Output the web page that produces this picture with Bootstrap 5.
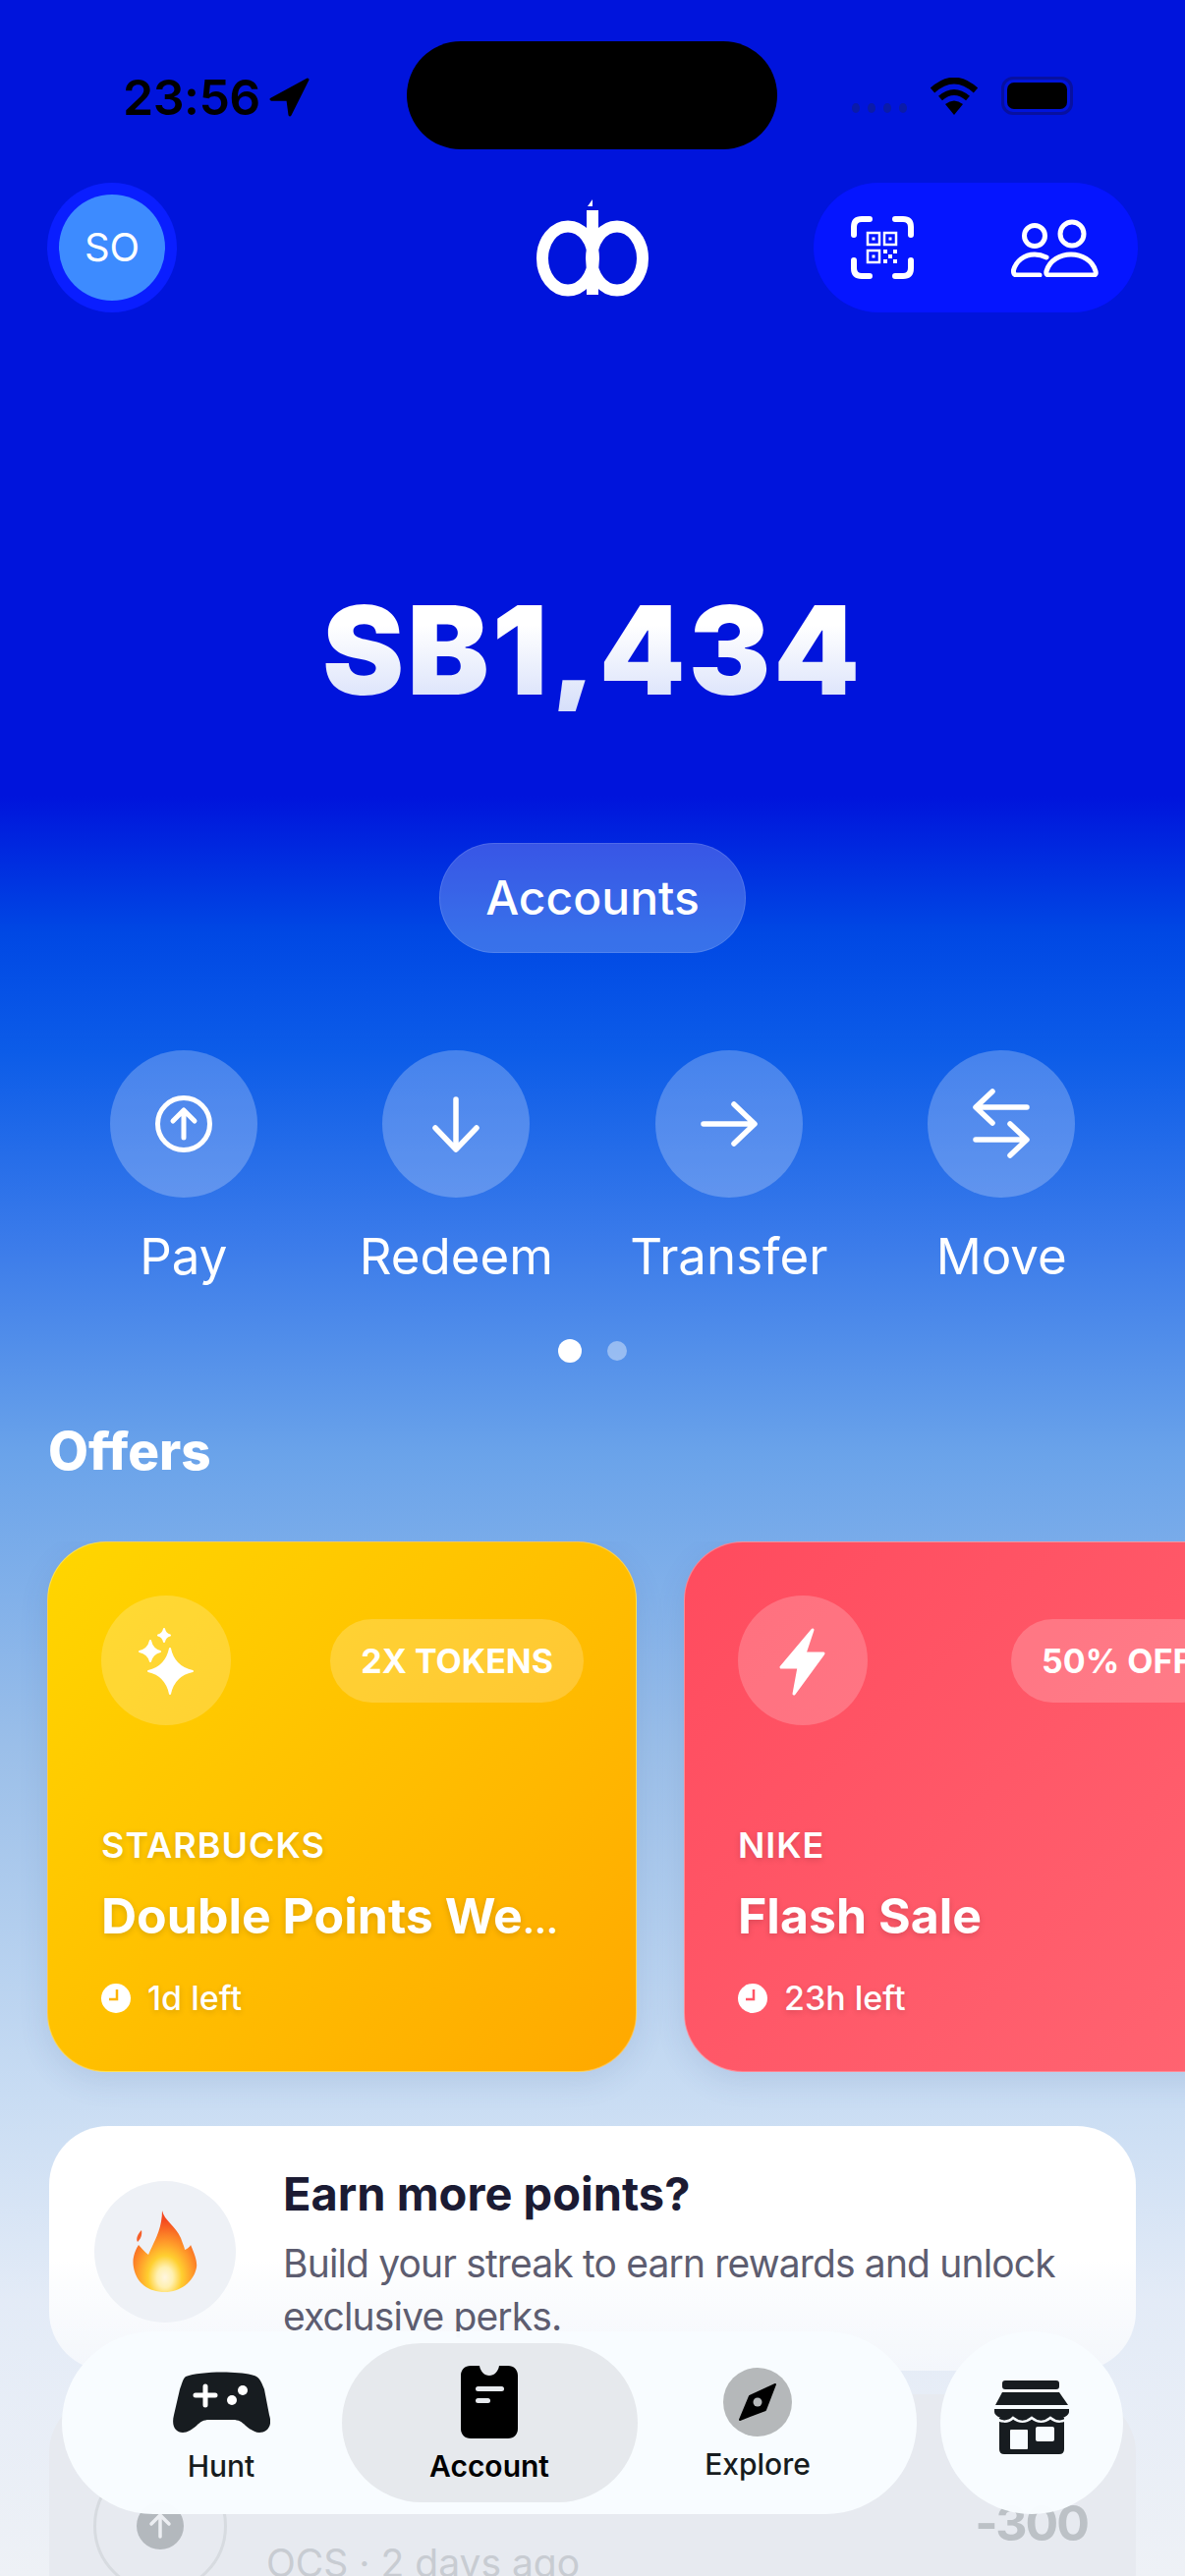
<!DOCTYPE html>
<html>
  <head>
    <meta charset="UTF-8" />
    <meta name="viewport" content="width=device-width, initial-scale=1.0" />
    <title>Account</title>
    <link href="https://cdn.jsdelivr.net/npm/bootstrap@5.3.0/dist/css/bootstrap.min.css" rel="stylesheet" />
    <style>
      html, body { width: 1206px; height: 2622px; overflow: hidden; }
      body {
        font-family: "Inter", "Liberation Sans", sans-serif;
        background: linear-gradient(180deg, #0014dc 0, #0014dc 810px, #0048e4 950px, #0c5ce8 1070px, #3c7cea 1270px, #6aa3ea 1480px, #9bbfe9 1780px, #c8dcf3 2130px, #e3ebf7 2340px, #eef1f6 2622px);
        position: relative;
      }
      .status-row { height: 186px; padding: 42px 114px 0 125px; }
      .clock-text { font-size: 50px; font-weight: 600; color: #000; line-height: 1; letter-spacing: -0.5px; padding-top: 32px; }
      .arrow-mark { margin-top: 37px; }
      .island { width: 377px; height: 110px; background: #000; border-radius: 55px; position: absolute; left: 414px; top: 42px; }
      .status-right { padding-top: 36px; }
      .sig-dots { gap: 8px; margin-top: 27px; margin-right: 23px; }
      .sig-dot { width: 8px; height: 10px; border-radius: 50%; background: #0a1ba8; }
      .wifi-mark { margin-top: 1px; margin-right: 23px; }
      .batt-shell { width: 73px; height: 39px; border: 3px solid #0710a0; border-radius: 12px; padding: 3px; }
      .batt-core { background: #000; border-radius: 7px; width: 100%; height: 100%; }
      .top-row { display: grid; grid-template-columns: 1fr auto 1fr; padding: 0 48px; height: 132px; }
      .avatar-ring { width: 132px; height: 132px; background: #0a1eff; padding: 12px; }
      .avatar-core { width: 108px; height: 108px; background: #3d8bff; color: #fff; font-size: 40px; font-weight: 400; }
      .tools-pill { width: 330px; height: 132px; background: #0515ff; padding-left: 38px; padding-right: 39px; }
      .balance-text {
        font-size: 125px; font-weight: 900; line-height: 1; letter-spacing: 3px; margin-top: 281px;
        background: linear-gradient(180deg, #ffffff 30%, #d6dffa 100%);
        -webkit-background-clip: text; background-clip: text; color: transparent;
      }
      .accounts-pill {
        width: 312px; height: 112px; margin-top: 134px; background: rgba(255, 255, 255, 0.22);
        border: 1px solid rgba(255, 255, 255, 0.12); color: #fff; font-size: 48px; font-weight: 500;
      }
      .action-row { margin: 99px 48px 0 48px; }
      .action-disc { width: 150px; height: 150px; background: rgba(255, 255, 255, 0.24); }
      .action-name { font-size: 51px; color: #fff; line-height: 1; margin-top: 34px; }
      .pager { margin-top: 59px; gap: 26px; height: 24px; }
      .pager-on { width: 24px; height: 24px; background: #fff; }
      .pager-off { width: 20px; height: 20px; background: rgba(255, 255, 255, 0.4); }
      .offers-head { font-size: 53px; font-weight: 800; color: #fff; line-height: 1; margin: 64px 0 0 49px; }
      .offer-strip { gap: 48px; padding: 0 0 40px 48px; margin-top: 65px; }
      .offer-card {
        width: 600px; height: 540px; flex: 0 0 600px; border-radius: 60px; border: 1px solid rgba(255, 255, 255, 0.3);
        padding: 54px 54px 0 54px; color: #fff; box-shadow: 0 10px 30px rgba(60, 80, 140, 0.12);
      }
      .offer-gold { background: linear-gradient(135deg, #ffd600 0%, #ffa800 100%); }
      .offer-red { background: linear-gradient(135deg, #ff4b5e 0%, #ff6572 100%); }
      .offer-disc { width: 132px; height: 132px; background: rgba(255, 255, 255, 0.2); }
      .offer-tag {
        height: 85px; background: rgba(255, 255, 255, 0.2); font-size: 34px; font-weight: 700; padding: 0 31px;
        white-space: nowrap; margin-right: -1px;
      }
      .offer-head-red { gap: 146px; }
      .offer-brand { font-size: 36px; font-weight: 600; letter-spacing: 1px; line-height: 1; margin-top: 104px; text-shadow: 0 2px 6px rgba(0, 0, 0, 0.15); }
      .offer-title { font-size: 50px; font-weight: 700; line-height: 1; margin-top: 29px; text-shadow: 0 2px 6px rgba(0, 0, 0, 0.15); white-space: nowrap; }
      .title-dots { font-size: 36px; }
      .offer-left { font-size: 34px; font-weight: 500; line-height: 1; margin-top: 42px; gap: 17px; text-shadow: 0 2px 6px rgba(0, 0, 0, 0.15); }
      .earn-card {
        margin: 15px 50px 0 50px; height: 249px; border-radius: 60px; padding: 56px 46px 0 46px; gap: 48px;
        background: linear-gradient(180deg, #fff 55%, rgba(255, 255, 255, 0.55) 100%);
      }
      .earn-disc { width: 144px; height: 144px; flex: 0 0 144px; background: #eef1f6; }
      .earn-title { font-size: 47px; font-weight: 700; color: #1b1b33; line-height: 1; margin-top: -11px; }
      .earn-text { font-size: 39px; letter-spacing: -0.85px; color: #5d5d70; line-height: 54px; margin-top: 21px; }
      .history-card { margin: 24px 50px 0 50px; height: 300px; background: #e7eaf0; border-radius: 60px 60px 0 0; padding: 66px 49px 0 45px; }
      .history-ring { width: 136px; height: 136px; border: 3px solid #d7dbe0; flex: 0 0 136px; }
      .history-dot { width: 48px; height: 48px; background: #b3b8bd; }
      .history-sub { font-size: 39px; color: #c8ccd2; line-height: 1; margin-left: 40px; margin-top: 86px; white-space: nowrap; }
      .history-amt { font-size: 50px; font-weight: 700; letter-spacing: -2px; color: #bcc1c6; line-height: 1; margin-top: 40px; }
      .dock { position: absolute; left: 63px; top: 2373px; width: 870px; height: 186px; background: rgba(248, 252, 255, 0.98); padding: 12px 0; }
      .dock-item { width: 245px; height: 162px; color: #171c20; font-size: 30px; font-weight: 500; line-height: 1; }
      .dock-active { width: 301px; background: #e6e9ed; color: #000; font-weight: 600; }
      .dock-icon-hunt { margin-top: 29px; margin-bottom: 19px; }
      .dock-icon-account { margin-top: 23px; margin-bottom: 13px; }
      .dock-icon-explore { margin-top: 25px; margin-bottom: 13px; }
      .dock-store { position: absolute; left: 957px; top: 2373px; width: 186px; height: 186px; background: rgba(248, 252, 255, 0.98); }
      .store-mark { margin-bottom: 10px; }
    </style>
  </head>
  <body>
    <div class="island"></div>
    <div class="status-row d-flex justify-content-between">
      <div class="d-flex align-items-start gap-2">
        <span class="clock-text">23:56</span>
        <svg class="arrow-mark" width="42" height="40" viewBox="0 0 40 38"><path d="M38 2 L3 21 H19 L21 36 Z" fill="#000" stroke="#000" stroke-width="3" stroke-linejoin="round" /></svg>
      </div>
      <div class="status-right d-flex align-items-start">
        <div class="sig-dots d-flex"><i class="sig-dot"></i><i class="sig-dot"></i><i class="sig-dot"></i><i class="sig-dot"></i></div>
        <svg class="wifi-mark" width="50" height="38" viewBox="0 0 50 38"><g fill="none" stroke="#000"><path d="M3 13 Q25 -7 47 13" stroke-width="6.5" /><path d="M11 21 Q25 9 39 21" stroke-width="6" /></g><path d="M16 27 Q25 20 34 27 L25 38 Z" fill="#000" /></svg>
        <div class="batt-shell"><div class="batt-core"></div></div>
      </div>
    </div>

    <div class="top-row align-items-center">
      <div class="avatar-ring rounded-circle">
        <div class="avatar-core rounded-circle d-flex align-items-center justify-content-center">SO</div>
      </div>
      <svg width="114" height="100" viewBox="26 12 114 100">
        <g fill="none" stroke="#fff" stroke-width="12"><ellipse cx="58" cy="73" rx="26" ry="32.5" /><ellipse cx="108" cy="73" rx="26" ry="32.5" /></g>
        <rect x="77" y="24" width="12" height="86" fill="#fff" />
        <path d="M78 20 L83 13 V20 Z" fill="#fff" />
      </svg>
      <div class="tools-pill rounded-pill d-flex align-items-center justify-content-between ms-auto">
        <svg width="64" height="64" viewBox="0 0 64 64">
          <g fill="none" stroke="#fff" stroke-width="6" stroke-linecap="round"><path d="M3 19 V11 Q3 3 11 3 H19" /><path d="M45 3 H53 Q61 3 61 11 V19" /><path d="M61 45 V53 Q61 61 53 61 H45" /><path d="M19 61 H11 Q3 61 3 53 V45" /></g>
          <g fill="none" stroke="#fff" stroke-width="2.5"><rect x="17" y="17" width="12" height="12" /><rect x="34" y="17" width="12" height="12" /><rect x="17" y="35" width="12" height="12" /></g>
          <g fill="#fff"><rect x="21.5" y="21.5" width="3" height="3" /><rect x="38.5" y="21.5" width="3" height="3" /><rect x="21.5" y="39.5" width="3" height="3" /><rect x="33" y="34" width="4" height="4" /><rect x="43" y="34" width="4" height="4" /><rect x="38" y="39" width="4" height="4" /><rect x="33" y="44" width="4" height="4" /><rect x="43" y="44" width="4" height="4" /></g>
        </svg>
        <svg width="90" height="60" viewBox="190 29 90 60">
          <g fill="none" stroke="#fff" stroke-width="5" stroke-linecap="round" stroke-linejoin="round">
            <circle cx="252" cy="45" r="12" /><circle cx="214" cy="47" r="10.5" />
            <path d="M229 87 H274 Q277 87 276 83 C273 72 262 66 251 66 C240 66 229 72 226 83 Q225 87 229 87 Z" />
            <path d="M226 69 C222 67 218 66 214 66 C203 66 195 73 192.5 82 Q192 87 196 87 H219" />
          </g>
        </svg>
      </div>
    </div>

    <div class="balance-text text-center">SB1,434</div>
    <div class="d-flex justify-content-center">
      <div class="accounts-pill rounded-pill d-flex align-items-center justify-content-center">Accounts</div>
    </div>

    <div class="row g-0 action-row text-center">
      <div class="col-3 d-flex flex-column align-items-center">
        <div class="action-disc rounded-circle">
          <svg width="150" height="150" viewBox="0 0 150 150" fill="none" stroke="#fff" stroke-width="5" stroke-linecap="round" stroke-linejoin="round"><circle cx="75" cy="75" r="26.5" /><path d="M75 89 V62 M64 72 L75 61 L86 72" /></svg>
        </div>
        <div class="action-name">Pay</div>
      </div>
      <div class="col-3 d-flex flex-column align-items-center">
        <div class="action-disc rounded-circle">
          <svg width="150" height="150" viewBox="0 0 150 150" fill="none" stroke="#fff" stroke-width="5.5" stroke-linecap="round" stroke-linejoin="round"><path d="M75 50 V100 M54 79 L75 101 L96 79" /></svg>
        </div>
        <div class="action-name">Redeem</div>
      </div>
      <div class="col-3 d-flex flex-column align-items-center">
        <div class="action-disc rounded-circle">
          <svg width="150" height="150" viewBox="0 0 150 150" fill="none" stroke="#fff" stroke-width="5.5" stroke-linecap="round" stroke-linejoin="round"><path d="M49 75 H100 M80 55 L101 75 L80 95" /></svg>
        </div>
        <div class="action-name">Transfer</div>
      </div>
      <div class="col-3 d-flex flex-column align-items-center">
        <div class="action-disc rounded-circle">
          <svg width="150" height="150" viewBox="0 0 150 150" fill="none" stroke="#fff" stroke-width="5.5" stroke-linecap="round" stroke-linejoin="round"><path d="M101 58 H50 M66 42 L49 58 L66 74 M49 91 H100 M84 75 L101 91 L84 107" /></svg>
        </div>
        <div class="action-name">Move</div>
      </div>
    </div>

    <div class="pager d-flex justify-content-center align-items-center">
      <span class="pager-on rounded-circle"></span>
      <span class="pager-off rounded-circle"></span>
    </div>

    <div class="offers-head">Offers</div>

    <div class="offer-strip d-flex overflow-hidden">
      <div class="offer-card offer-gold">
        <div class="d-flex justify-content-between align-items-center">
          <div class="offer-disc rounded-circle">
            <svg width="132" height="132" viewBox="-8 4 132 132" fill="#fff" stroke="#fff" stroke-width="2" stroke-linejoin="round">
              <path d="M62 58 Q66 77 85 81 Q66 85 62 104 Q58 85 40 81 Q58 77 62 58 Z" />
              <path d="M42 50 Q44 59 52 61 Q44 63 42 71 Q40 63 31 61 Q40 59 42 50 Z" />
              <path d="M56 38 Q57 43 62 44.5 Q57 46 56 51 Q55 46 50 44.5 Q55 43 56 38 Z" />
            </svg>
          </div>
          <div class="offer-tag rounded-pill d-flex align-items-center">2X TOKENS</div>
        </div>
        <div class="offer-brand">STARBUCKS</div>
        <div class="offer-title">Double Points We<span class="title-dots">…</span></div>
        <div class="offer-left d-flex align-items-center">
          <svg width="30" height="30" viewBox="0 0 30 30"><circle cx="15" cy="15" r="15" fill="#fff" /><path d="M16 6 V16 H8" fill="none" stroke="#ffb400" stroke-width="2.5" /></svg>
          <span>1d left</span>
        </div>
      </div>
      <div class="offer-card offer-red">
        <div class="offer-head-red d-flex align-items-center">
          <div class="offer-disc rounded-circle flex-shrink-0">
            <svg width="132" height="132" viewBox="0 0 132 132"><path d="M76 35 L44 73 H62 L57 100 L87 59 H68 Z" fill="#fff" stroke="#fff" stroke-width="3" stroke-linejoin="round" /></svg>
          </div>
          <div class="offer-tag rounded-pill d-flex align-items-center">50% OFF</div>
        </div>
        <div class="offer-brand">NIKE</div>
        <div class="offer-title">Flash Sale</div>
        <div class="offer-left d-flex align-items-center">
          <svg width="30" height="30" viewBox="0 0 30 30"><circle cx="15" cy="15" r="15" fill="#fff" /><path d="M16 6 V16 H8" fill="none" stroke="#ff5566" stroke-width="2.5" /></svg>
          <span>23h left</span>
        </div>
      </div>
    </div>

    <div class="earn-card d-flex overflow-hidden">
      <div class="earn-disc rounded-circle d-flex align-items-center justify-content-center">
        <svg width="66" height="84" viewBox="44 12 66 84">
          <defs>
            <radialGradient id="flameFill" cx="50%" cy="82%" r="70%">
              <stop offset="0" stop-color="#fff6e0" /><stop offset="0.18" stop-color="#fff0b0" /><stop offset="0.38" stop-color="#ffcf30" /><stop offset="0.62" stop-color="#ff9a2a" /><stop offset="1" stop-color="#f4491f" />
            </radialGradient>
          </defs>
          <path d="M74 12 C76 22 88 28 93 40 C95 46 97 50 97 52 C100 51 103 48 103 47 C107 56 110 64 109 70 C106 85 92 95 77 95 C60 95 48 86 45 70 C43 60 47 52 50 47 C53 50 57 55 60 57 C65 45 74 32 74 12 Z" fill="url(#flameFill)" />
          <path d="M53 32 C49 36 47 41 49 44 C52 41 54 37 53 32 Z" fill="#f6602a" />
        </svg>
      </div>
      <div>
        <div class="earn-title">Earn more points?</div>
        <div class="earn-text">Build your streak to earn rewards and unlock exclusive perks.</div>
      </div>
    </div>

    <div class="history-card d-flex">
      <div class="history-ring rounded-circle d-flex align-items-center justify-content-center">
        <div class="history-dot rounded-circle d-flex align-items-center justify-content-center">
          <svg width="28" height="28" viewBox="0 0 28 28" fill="none" stroke="#eceef2" stroke-width="3.5" stroke-linecap="round" stroke-linejoin="round"><path d="M14 25 V4 M5 12 L14 3 L23 12" /></svg>
        </div>
      </div>
      <div class="history-sub flex-grow-1">OCS · 2 days ago</div>
      <div class="history-amt">-300</div>
    </div>

    <div class="dock rounded-pill d-flex justify-content-center">
      <div class="dock-item d-flex flex-column align-items-center rounded-pill">
        <svg class="dock-icon-hunt" width="99" height="62" viewBox="27 24 99 62"><path d="M40 29 C55 23 100 23 112 29 C116 31 118 37 120 42 L125 68 C129 80 122 86 115 86 C110 86 106 83 101 79 C97 75 94 73 88 73 H64 C58 73 55 75 51 79 C46 83 42 86 37 86 C30 86 25 80 28 68 L34 42 C36 37 37 31 40 29 Z" fill="#171c20" /><path d="M60 39 V58 M50 48 H70" stroke="#fff" stroke-width="5" stroke-linecap="round" /><circle cx="98" cy="43" r="5" fill="#fff" /><circle cx="87" cy="53" r="5" fill="#fff" /></svg>
        <span>Hunt</span>
      </div>
      <div class="dock-item dock-active d-flex flex-column align-items-center rounded-pill">
        <svg class="dock-icon-account" width="58" height="74" viewBox="0 0 58 74"><path d="M10 0 H19 C20 6 24 10 29 10 C34 10 38 6 39 0 H48 C54 0 58 4 58 10 V64 C58 70 54 74 48 74 H10 C4 74 0 70 0 64 V10 C0 4 4 0 10 0 Z" fill="#000" /><rect x="15" y="21" width="29" height="5" rx="2.5" fill="#e6e9ed" /><rect x="15" y="33" width="15" height="5" rx="2.5" fill="#e6e9ed" /></svg>
        <span>Account</span>
      </div>
      <div class="dock-item d-flex flex-column align-items-center rounded-pill">
        <svg class="dock-icon-explore" width="70" height="70" viewBox="-35 -35 70 70"><circle r="35" fill="#b5b8ba" /><path d="M18 -18 L8 8 L-18 18 L-8 -6 Z" fill="#000" stroke="#000" stroke-width="2" stroke-linejoin="round" /><circle r="4.5" fill="#b5b8ba" /></svg>
        <span>Explore</span>
      </div>
    </div>
    <div class="dock-store rounded-circle d-flex align-items-center justify-content-center">
      <svg class="store-mark" width="76" height="76" viewBox="312 38 76 76">
        <rect x="320" y="38" width="58" height="9" rx="3" fill="#171c20" />
        <path d="M320 50 H378 L387 63 H313 Z" fill="#171c20" />
        <path d="M317 76 H383 V108 Q383 113 378 113 H322 Q317 113 317 108 Z" fill="#171c20" />
        <path d="M312 67 H388 V70 C388 75 376 80 369 75 C363 80 356 80 350 75 C344 80 337 80 331 75 C324 80 312 75 312 70 Z" fill="#171c20" />
        <path d="M312 75 C318 81 326 81 331 76 C337 81 344 81 350 76 C356 81 363 81 369 76 C375 81 383 81 388 75" fill="none" stroke="#f8fcff" stroke-width="2.5" />
        <rect x="328" y="88" width="18" height="20" rx="1" fill="#f8fcff" />
        <rect x="354" y="85" width="19" height="15" rx="2" fill="#f8fcff" />
      </svg>
    </div>
  </body>
</html>
